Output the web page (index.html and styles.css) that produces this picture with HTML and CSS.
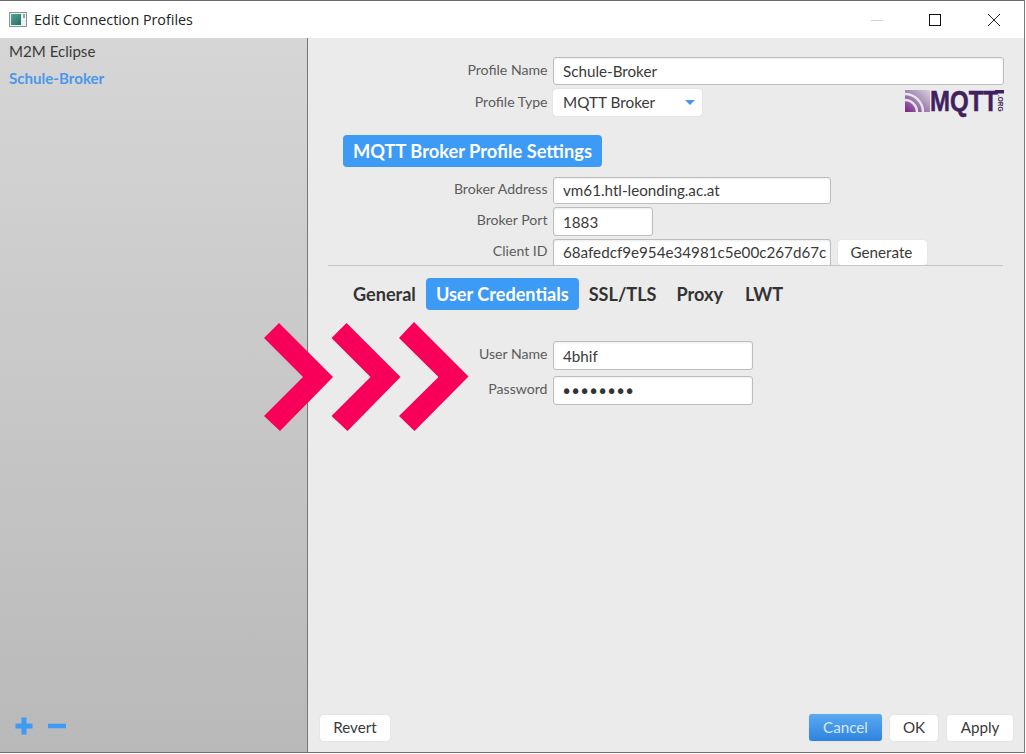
FILE: index.html
```html
<!DOCTYPE html>
<html lang="en">
<head>
<meta charset="utf-8">
<title>Edit Connection Profiles</title>
<link rel="stylesheet" href="styles.css">
</head>
<body>
<div class="window">
  <header class="titlebar">
    <svg class="app-icon" width="18" height="15" viewBox="0 0 18 15">
      <defs><linearGradient id="teal" x1="0" y1="0" x2="1" y2="1"><stop offset="0" stop-color="#5aa59b"/><stop offset="1" stop-color="#1f6f62"/></linearGradient></defs>
      <rect x="0.5" y="0.5" width="17" height="14" fill="#eef1f1" stroke="#8d9393"/>
      <rect x="2" y="2" width="10" height="11" fill="url(#teal)"/>
      <rect x="14" y="2" width="2" height="4" fill="#9aa3a3"/>
    </svg>
    <span class="title">Edit Connection Profiles</span>
    <div class="win-controls">
      <svg width="14" height="14" viewBox="0 0 14 14" class="win-min"><path d="M1 7.5h12" stroke="#d0d0d0"/></svg>
      <svg width="14" height="14" viewBox="0 0 14 14" class="win-max"><rect x="1.5" y="1.5" width="11" height="11" fill="none" stroke="#111"/></svg>
      <svg width="14" height="14" viewBox="0 0 14 14" class="win-close"><path d="M1 1l12 12M13 1L1 13" stroke="#222" stroke-width="1"/></svg>
    </div>
  </header>
  <div class="main">
    <aside class="sidebar">
      <ul class="profiles">
        <li class="profile">M2M Eclipse</li>
        <li class="profile profile-active">Schule-Broker</li>
      </ul>
      <div class="side-actions">
        <svg width="18" height="18" viewBox="0 0 18 18"><path d="M9 0.5v17M0.5 9h17" stroke="#3d9af5" stroke-width="5"/></svg>
        <svg width="18" height="18" viewBox="0 0 18 18"><path d="M0 9h18" stroke="#3d9af5" stroke-width="4.5"/></svg>
      </div>
    </aside>
    <section class="panel">
      <div class="field field-name">
        <label class="label">Profile Name</label>
        <input class="input input-full" value="Schule-Broker">
      </div>
      <div class="field field-type">
        <label class="label">Profile Type</label>
        <div class="select">MQTT Broker<span class="caret"></span></div>
        <svg class="logo" width="100" height="32" viewBox="0 0 100 32">
          <defs>
            <linearGradient id="wave" x1="0" y1="1" x2="1" y2="0"><stop offset="0" stop-color="#7c1f86"/><stop offset="0.5" stop-color="#a287b3"/><stop offset="1" stop-color="#d6d0dc"/></linearGradient>
          </defs>
          <rect x="0" y="1" width="25" height="22" fill="url(#wave)"/>
          <path d="M0 5A18 18 0 0 1 18 23M0 11A12 12 0 0 1 12 23" fill="none" stroke="#e6e4ea" stroke-width="2.500"/>
          <text class="logo-text" x="25" y="22" textLength="68" lengthAdjust="spacingAndGlyphs">MQTT</text>
          <rect class="logo-bar" x="90" y="1" width="9" height="3.500"/>
          <text class="logo-org" transform="translate(93 6) rotate(90)">.ORG</text>
        </svg>
      </div>
      <h2 class="section-tag">MQTT Broker Profile Settings</h2>
      <div class="field field-address">
        <label class="label">Broker Address</label>
        <input class="input input-wide" value="vm61.htl-leonding.ac.at">
      </div>
      <div class="field field-port">
        <label class="label">Broker Port</label>
        <input class="input input-port" value="1883">
      </div>
      <div class="field field-client">
        <label class="label">Client ID</label>
        <input class="input input-wide input-open" value="68afedcf9e954e34981c5e00c267d67c">
        <button class="btn btn-generate">Generate</button>
      </div>
      <hr class="divider">
      <nav class="tabs">
        <span class="tab">General</span>
        <span class="tab tab-active">User Credentials</span>
        <span class="tab">SSL/TLS</span>
        <span class="tab">Proxy</span>
        <span class="tab">LWT</span>
      </nav>
      <div class="field field-user">
        <label class="label">User Name</label>
        <input class="input input-cred" value="4bhif">
      </div>
      <div class="field field-pass">
        <label class="label">Password</label>
        <input class="input input-cred input-secret" type="password" value="12345678">
      </div>
      <footer class="footer">
        <button class="btn btn-revert">Revert</button>
        <div class="footer-right">
          <button class="btn btn-primary">Cancel</button>
          <button class="btn btn-ok">OK</button>
          <button class="btn btn-apply">Apply</button>
        </div>
      </footer>
    </section>
  </div>
  <svg class="chevrons" width="210" height="112" viewBox="0 0 210 112">
    <path d="M0 16L15 1 69 55 16 109 0 94 39 55Z"/>
    <path d="M67.500 16L82.500 1 136.500 55 83.500 109 67.500 94 106.500 55Z"/>
    <path d="M135 16L150 0 204.500 54.500 150.500 109 135 94 174.500 55Z"/>
  </svg>
</div>
</body>
</html>
```
FILE: styles.css
```css
* { box-sizing: border-box; }
html, body { margin: 0; padding: 0; background: #fff; }
body { width: 1026px; height: 754px; overflow: hidden; font-family: Lato, "Liberation Sans", sans-serif; color: #333; }
.window { position: relative; width: 1025px; height: 753px; display: flex; flex-direction: column; border-top: 1px solid #6a6a6a; border-right: 1px solid #7a7a7a; border-bottom: 1px solid #6f6f6f; background: #ebebeb; }

.titlebar { flex: none; height: 37px; background: #fff; display: flex; align-items: center; padding-left: 9px; }
.app-icon { flex: none; }
.title { margin-left: 7px; font: 14.300px "Open Sans", "Noto Sans", sans-serif; color: #222; }
.win-controls { margin-left: auto; display: flex; align-items: center; }
.win-min { margin-right: 44px; }
.win-max { margin-right: 45px; }
.win-close { margin-right: 23px; }

.main { flex: 1; min-height: 0; display: flex; }
.sidebar { flex: none; width: 308px; border-right: 1px solid #777; background: linear-gradient(#d6d6d6, #b9b9b9); display: flex; flex-direction: column; justify-content: space-between; }
.profiles { list-style: none; margin: 0; padding: 0; }
.profile { height: 27px; padding-left: 9px; font-size: 15.100px; line-height: 27px; color: #3a3a3a; }
.profile-active { color: #4a98ec; font-weight: 700; }
.side-actions { display: flex; gap: 15px; padding: 0 0 17px 15px; }

.panel { flex: 1; min-width: 0; display: flex; flex-direction: column; }
.field { display: flex; align-items: center; gap: 5px; }
.label { flex: none; width: 240px; padding: 0 0.500px 3px 0; text-align: right; font-size: 14.100px; color: #5c5c5c; }
.field-address .label, .field-port .label, .field-user .label, .field-pass .label { padding-bottom: 5px; }
.input { height: 28px; padding: 0 9px; border: 1px solid #bdbdbd; border-radius: 3px; background: #fff; font: 15.200px Lato, sans-serif; color: #3a3a3a; outline: none; box-shadow: inset 0 1px 2px rgba(0,0,0,.08); }
.input-full { width: 451px; }
.input-wide { width: 278px; }
.input-port { width: 100px; }
.input-cred { width: 200px; }
.input-open { border-bottom: none; border-radius: 3px 3px 0 0; }
.input-secret { padding-left: 7px; font-family: "DejaVu Sans", sans-serif; font-size: 19px; letter-spacing: -2.200px; color: #333; }

.field-name { margin-top: 19px; }
.field-type { margin-top: 4px; position: relative; }
.select { width: 149px; height: 27px; padding-left: 10px; background: #fff; border-radius: 3px; box-shadow: 0 0 1px rgba(0,0,0,.25); font-size: 15.300px; line-height: 27px; color: #3a3a3a; position: relative; }
.caret { position: absolute; right: 7px; top: 11px; border-left: 5px solid transparent; border-right: 5px solid transparent; border-top: 5px solid #4a98ec; }
.logo { position: absolute; left: 597px; top: 0; overflow: visible; }
.logo-text { font: 700 29.500px "Liberation Sans", sans-serif; fill: #41205f; stroke: #41205f; stroke-width: 0.500px; }
.logo-bar { fill: #41205f; }
.logo-org { font: 700 6.500px "Liberation Sans", sans-serif; fill: #41205f; }

.section-tag { align-self: flex-start; margin: 19px 0 0 35px; height: 32px; padding: 0 10px; border-radius: 4px; background: #3d9af5; color: #fff; font-size: 18.250px; font-weight: 700; line-height: 32px; }
.field-address { margin-top: 10px; }
.field-address .input { height: 27px; padding-bottom: 2px; }
.field-port { margin-top: 3px; }
.field-port .input { height: 29px; }
.field-client { margin-top: 3px; }
.field-client .input { height: 26px; padding: 0 1px 1px 9px; }
.btn { border: none; border-radius: 3px; background: #fff; font: 15.200px Lato, sans-serif; color: #3a3a3a; padding: 0 0 2px; height: 26px; box-shadow: 0 0 1px rgba(0,0,0,.2); }
.btn-generate { width: 89px; height: 25px; margin-left: 2px; margin-top: 1px; padding-right: 2px; }
.divider { margin: 0 21px 0 20px; border: none; border-top: 1px solid #c6c6c6; height: 1px; }

.tabs { display: flex; align-items: center; margin: 12px 0 0 35px; height: 32px; gap: 0; }
.tab { font-size: 18.100px; font-weight: 700; color: #333; padding: 0 10px; line-height: 32px; height: 32px; }
.tab:last-child { margin-left: 2px; }
.tab-active { background: #3d9af5; color: #fff; border-radius: 4px; }

.field-user { margin-top: 31px; }
.field-user .input { height: 29px; }
.field-pass { margin-top: 6px; }
.field-pass .input { height: 29px; }

.footer { margin-top: auto; display: flex; justify-content: space-between; align-items: center; padding: 0 11px 11px 12px; }
.footer-right { display: flex; align-items: center; gap: 8px; }
.btn-revert { width: 70px; }
.btn-primary { width: 73px; height: 27px; background: linear-gradient(#5aa9f2, #2f83de); color: #d6e9fb; }
.btn-ok { width: 48px; }
.btn-apply { width: 66px; margin-left: 1px; }

.chevrons { position: absolute; left: 264px; top: 321px; fill: #f8005a; }
```
